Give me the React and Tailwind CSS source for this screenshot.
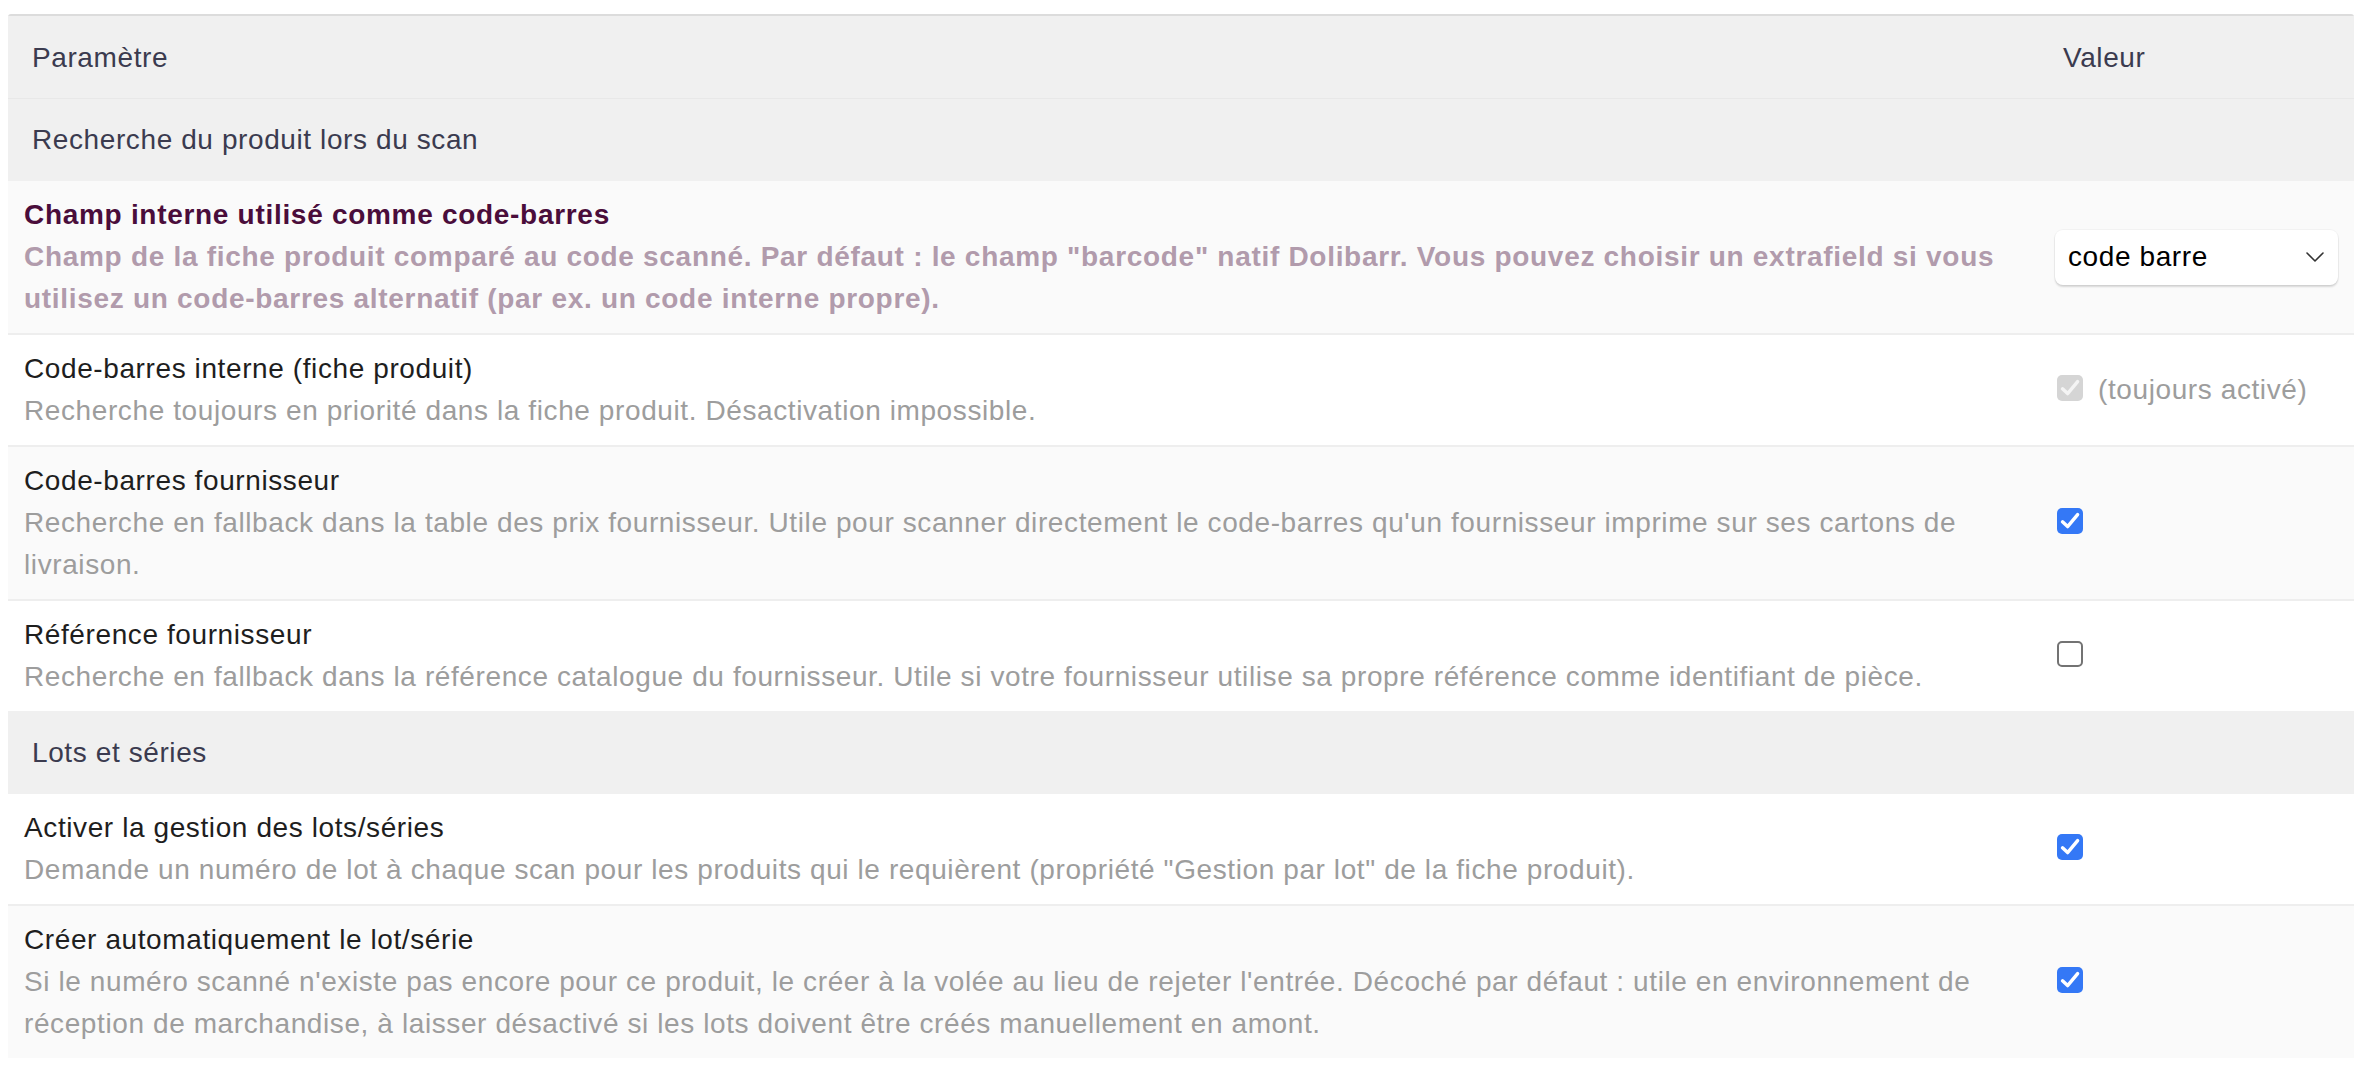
import React from "react";

const Check = ({ state }) => {
  if (state === "off") {
    return <span className="block w-[26px] h-[26px] rounded-[5px] border-2 border-[#737373] bg-white mb-[5px]" />;
  }
  const bg = state === "disabled" ? "bg-[#d5d5d5]" : "bg-[#3478f6]";
  return (
    <span className={`flex w-[26px] h-[26px] rounded-[5px] ${bg} mb-[5px] shrink-0`}>
      <svg width="26" height="26" viewBox="0 0 26 26" fill="none">
        <path d="M5.5 13.8 L10.6 18.6 L20.6 6.6" stroke={state === "disabled" ? "#f4f4f4" : "#ffffff"} strokeWidth="3.4" strokeLinecap="round" strokeLinejoin="round" />
      </svg>
    </span>
  );
};

const Select = () => (
  <div className="flex items-center justify-between w-[283px] h-[55px] pl-[13px] pr-[14px] bg-white rounded-[8px] shadow-[0_0_0_1px_rgba(0,0,0,0.03),0_2px_2px_rgba(0,0,0,0.14)] text-black">
    <span>code barre</span>
    <svg width="18" height="10" viewBox="0 0 18 10" fill="none">
      <path d="M1 1 L9 9 L17 1" stroke="#333" strokeWidth="1.6" strokeLinecap="round" strokeLinejoin="round" />
    </svg>
  </div>
);

const Section = ({ label, first }) => (
  <div className={`flex items-center h-[83px] bg-[#f0f0f0] pl-[24px] text-[#3b3b4f] ${first ? "border-t border-[#e8e8e8]" : ""}`}>
    {label}
  </div>
);

const Row = ({ title, desc, value, bg, border, strong }) => (
  <div className={`flex ${bg} ${border ? "border-b-2 border-[#eeeeee]" : ""}`}>
    <div className="flex-1 pl-[16px] pr-[16px] pt-[13px] pb-[13px]">
      <div className={strong ? "font-bold tracking-[0.7px] text-[#4a0d3b]" : "text-[#1e1e1e]"}>{title}</div>
      <div className={strong ? "font-bold tracking-[0.7px] text-[#b19bac]" : "text-[#9d9d9d]"}>{desc}</div>
    </div>
    <div className="w-[315px] shrink-0 flex items-center px-[16px]">{value}</div>
  </div>
);

export default function App() {
  return (
    <div className="bg-white min-h-screen pt-[14px] pl-[8px] text-[28px] leading-[42px] tracking-[0.6px] font-['Liberation_Sans','Helvetica',Arial,sans-serif]">
      <div className="w-[2346px] border-t-2 border-[#dcdcdc] rounded-t-[3px]">
        <div className="flex items-center h-[82px] bg-[#f0f0f0] text-[#3b3b4f] pt-[2px]">
          <div className="flex-1 pl-[24px]">Paramètre</div>
          <div className="w-[315px] pl-[24px]">Valeur</div>
        </div>
        <Section label="Recherche du produit lors du scan" first />
        <Row
          strong
          bg="bg-[#fafafa]"
          border
          title="Champ interne utilisé comme code-barres"
          desc={'Champ de la fiche produit comparé au code scanné. Par défaut : le champ "barcode" natif Dolibarr. Vous pouvez choisir un extrafield si vous utilisez un code-barres alternatif (par ex. un code interne propre).'}
          value={<Select />}
        />
        <Row
          bg="bg-white"
          border
          title="Code-barres interne (fiche produit)"
          desc="Recherche toujours en priorité dans la fiche produit. Désactivation impossible."
          value={
            <div className="flex items-center gap-[15px] pl-[2px]">
              <Check state="disabled" />
              <span className="text-[#9d9d9d]">(toujours activé)</span>
            </div>
          }
        />
        <Row
          bg="bg-[#fafafa]"
          border
          title="Code-barres fournisseur"
          desc="Recherche en fallback dans la table des prix fournisseur. Utile pour scanner directement le code-barres qu'un fournisseur imprime sur ses cartons de livraison."
          value={<div className="pl-[2px]"><Check state="on" /></div>}
        />
        <Row
          bg="bg-white"
          title="Référence fournisseur"
          desc="Recherche en fallback dans la référence catalogue du fournisseur. Utile si votre fournisseur utilise sa propre référence comme identifiant de pièce."
          value={<div className="pl-[2px]"><Check state="off" /></div>}
        />
        <Section label="Lots et séries" />
        <Row
          bg="bg-white"
          border
          title="Activer la gestion des lots/séries"
          desc={'Demande un numéro de lot à chaque scan pour les produits qui le requièrent (propriété "Gestion par lot" de la fiche produit).'}
          value={<div className="pl-[2px]"><Check state="on" /></div>}
        />
        <Row
          bg="bg-[#fafafa]"
          title="Créer automatiquement le lot/série"
          desc="Si le numéro scanné n'existe pas encore pour ce produit, le créer à la volée au lieu de rejeter l'entrée. Décoché par défaut : utile en environnement de réception de marchandise, à laisser désactivé si les lots doivent être créés manuellement en amont."
          value={<div className="pl-[2px]"><Check state="on" /></div>}
        />
      </div>
    </div>
  );
}
